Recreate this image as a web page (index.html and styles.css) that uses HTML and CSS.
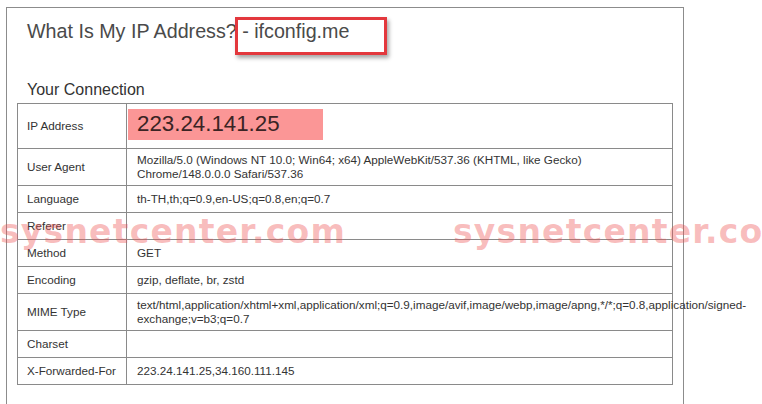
FILE: index.html
```html
<!DOCTYPE html>
<html lang="en">
<head>
<meta charset="utf-8">
<title>What Is My IP Address? - ifconfig.me</title>
<link rel="stylesheet" href="styles.css">
</head>
<body>
<div class="panel">
  <h1 class="title">What Is My IP Address? - ifconfig.me</h1>
  <h2 class="subtitle">Your Connection</h2>
  <table class="conn">
    <colgroup><col class="c-label"><col class="c-value"></colgroup>
    <tr><td class="label">IP Address</td><td class="ip-cell"><div class="ip">223.24.141.25</div></td></tr>
    <tr><td class="label">User Agent</td><td class="value">Mozilla/5.0 (Windows NT 10.0; Win64; x64) AppleWebKit/537.36 (KHTML, like Gecko)<br>Chrome/148.0.0.0 Safari/537.36</td></tr>
    <tr><td class="label">Language</td><td class="value">th-TH,th;q=0.9,en-US;q=0.8,en;q=0.7</td></tr>
    <tr><td class="label">Referer</td><td class="value"></td></tr>
    <tr><td class="label">Method</td><td class="value">GET</td></tr>
    <tr><td class="label">Encoding</td><td class="value">gzip, deflate, br, zstd</td></tr>
    <tr><td class="label">MIME Type</td><td class="value"><div class="wide">text/html,application/xhtml+xml,application/xml;q=0.9,image/avif,image/webp,image/apng,*/*;q=0.8,application/signed-<br>exchange;v=b3;q=0.7</div></td></tr>
    <tr><td class="label">Charset</td><td class="value"></td></tr>
    <tr><td class="label">X-Forwarded-For</td><td class="value">223.24.141.25,34.160.111.145</td></tr>
  </table>
</div>
<div class="callout"></div>
<div class="watermark wm-1">sysnetcenter.com</div>
<div class="watermark wm-2">sysnetcenter.com</div>
</body>
</html>
```

FILE: styles.css
```css
html, body {
  margin: 0;
  padding: 0;
  background: #ffffff;
  overflow: hidden;
}
body {
  font-family: "Liberation Sans", Arial, sans-serif;
  color: #333333;
  width: 762px;
  height: 404px;
  position: relative;
}
.panel {
  margin: 7px 0 0 6px;
  width: 656px;
  height: 397px;
  padding: 0 10px 0 10px;
  border: 1px solid #8c8c8c;
  border-bottom: none;
}
.title {
  margin: 11px 0 0 0;
  padding-left: 10px;
  font-size: 19.7px;
  line-height: 24px;
  font-weight: normal;
  color: #4a4a4a;
}
.subtitle {
  margin: 37px 0 0 0;
  padding-left: 10px;
  font-size: 16px;
  line-height: 20px;
  font-weight: normal;
  color: #333333;
}
.conn {
  margin-top: 3px;
  width: 656px;
  border-collapse: collapse;
  table-layout: fixed;
  font-size: 11.7px;
  line-height: 14px;
  color: #333333;
}
.c-label { width: 109px; }
.conn td {
  border: 1px solid #8a8a8a;
  height: 18px;
  padding: 4px 9px 4px 10px;
  vertical-align: middle;
}
.conn td.label {
  padding-left: 9px;
  padding-right: 4px;
  white-space: nowrap;
}
.conn td.ip-cell {
  padding: 5px 0 8px 1px;
  vertical-align: top;
}
.ip {
  width: 186px;
  height: 31px;
  padding-left: 9px;
  background: #fb9696;
  color: #3a2424;
  font-size: 22.3px;
  line-height: 30px;
}
.wide {
  white-space: nowrap;
}
.callout {
  position: absolute;
  left: 235px;
  top: 17px;
  width: 146px;
  height: 32px;
  border: 3px solid #e3383d;
  box-shadow: 2px 3px 4px rgba(0, 0, 0, 0.35);
}
.watermark {
  position: absolute;
  top: 212px;
  font-family: "DejaVu Sans", sans-serif;
  font-weight: bold;
  font-size: 33px;
  line-height: 40px;
  letter-spacing: 1.2px;
  color: rgba(238, 80, 80, 0.38);
  white-space: nowrap;
}
.wm-1 { left: 0; }
.wm-2 { left: 453px; }
```
